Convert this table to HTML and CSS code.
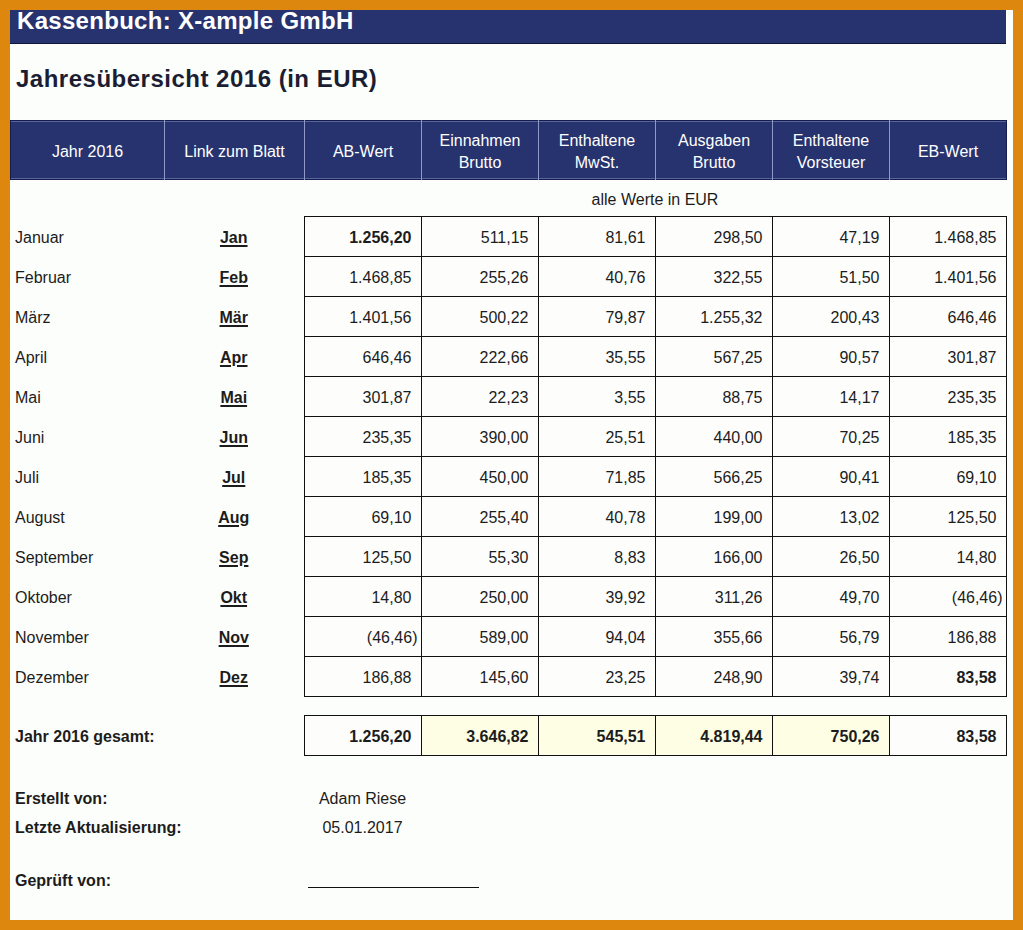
FILE: index.html
```html
<!DOCTYPE html>
<html lang="de">
<head>
<meta charset="utf-8">
<title>Kassenbuch</title>
<link rel="stylesheet" href="styles.css">
</head>
<body>
<div class="frame">
  <div class="page">
    <div class="titlebar">Kassenbuch: X-ample GmbH</div>
    <h1 class="heading">Jahresübersicht 2016 (in EUR)</h1>

    <table class="grid head">
      <colgroup>
        <col class="c-month"><col class="c-link"><col class="c-num"><col class="c-num"><col class="c-num"><col class="c-num"><col class="c-num"><col class="c-num">
      </colgroup>
      <tr>
        <th>Jahr 2016</th>
        <th>Link zum Blatt</th>
        <th>AB-Wert</th>
        <th>Einnahmen<br>Brutto</th>
        <th>Enthaltene<br>MwSt.</th>
        <th>Ausgaben<br>Brutto</th>
        <th>Enthaltene<br>Vorsteuer</th>
        <th>EB-Wert</th>
      </tr>
    </table>

    <div class="unit-row"><div class="unit">alle Werte in EUR</div></div>

    <table class="grid data">
      <colgroup>
        <col class="c-month"><col class="c-link"><col class="c-num"><col class="c-num"><col class="c-num"><col class="c-num"><col class="c-num"><col class="c-num">
      </colgroup>
      <tr><td class="month">Januar</td><td class="link"><a>Jan</a></td><td class="num b">1.256,20</td><td class="num">511,15</td><td class="num">81,61</td><td class="num">298,50</td><td class="num">47,19</td><td class="num">1.468,85</td></tr>
      <tr><td class="month">Februar</td><td class="link"><a>Feb</a></td><td class="num">1.468,85</td><td class="num">255,26</td><td class="num">40,76</td><td class="num">322,55</td><td class="num">51,50</td><td class="num">1.401,56</td></tr>
      <tr><td class="month">März</td><td class="link"><a>Mär</a></td><td class="num">1.401,56</td><td class="num">500,22</td><td class="num">79,87</td><td class="num">1.255,32</td><td class="num">200,43</td><td class="num">646,46</td></tr>
      <tr><td class="month">April</td><td class="link"><a>Apr</a></td><td class="num">646,46</td><td class="num">222,66</td><td class="num">35,55</td><td class="num">567,25</td><td class="num">90,57</td><td class="num">301,87</td></tr>
      <tr><td class="month">Mai</td><td class="link"><a>Mai</a></td><td class="num">301,87</td><td class="num">22,23</td><td class="num">3,55</td><td class="num">88,75</td><td class="num">14,17</td><td class="num">235,35</td></tr>
      <tr><td class="month">Juni</td><td class="link"><a>Jun</a></td><td class="num">235,35</td><td class="num">390,00</td><td class="num">25,51</td><td class="num">440,00</td><td class="num">70,25</td><td class="num">185,35</td></tr>
      <tr><td class="month">Juli</td><td class="link"><a>Jul</a></td><td class="num">185,35</td><td class="num">450,00</td><td class="num">71,85</td><td class="num">566,25</td><td class="num">90,41</td><td class="num">69,10</td></tr>
      <tr><td class="month">August</td><td class="link"><a>Aug</a></td><td class="num">69,10</td><td class="num">255,40</td><td class="num">40,78</td><td class="num">199,00</td><td class="num">13,02</td><td class="num">125,50</td></tr>
      <tr><td class="month">September</td><td class="link"><a>Sep</a></td><td class="num">125,50</td><td class="num">55,30</td><td class="num">8,83</td><td class="num">166,00</td><td class="num">26,50</td><td class="num">14,80</td></tr>
      <tr><td class="month">Oktober</td><td class="link"><a>Okt</a></td><td class="num">14,80</td><td class="num">250,00</td><td class="num">39,92</td><td class="num">311,26</td><td class="num">49,70</td><td class="num neg">(46,46)</td></tr>
      <tr><td class="month">November</td><td class="link"><a>Nov</a></td><td class="num neg">(46,46)</td><td class="num">589,00</td><td class="num">94,04</td><td class="num">355,66</td><td class="num">56,79</td><td class="num">186,88</td></tr>
      <tr><td class="month">Dezember</td><td class="link"><a>Dez</a></td><td class="num">186,88</td><td class="num">145,60</td><td class="num">23,25</td><td class="num">248,90</td><td class="num">39,74</td><td class="num b">83,58</td></tr>
    </table>

    <table class="grid data total">
      <colgroup>
        <col class="c-month"><col class="c-link"><col class="c-num"><col class="c-num"><col class="c-num"><col class="c-num"><col class="c-num"><col class="c-num">
      </colgroup>
      <tr><td class="month b" colspan="2">Jahr 2016 gesamt:</td><td class="num b">1.256,20</td><td class="num b hl">3.646,82</td><td class="num b hl">545,51</td><td class="num b hl">4.819,44</td><td class="num b hl">750,26</td><td class="num b">83,58</td></tr>
    </table>

    <div class="meta">
      <div class="label">Erstellt von:</div><div class="value">Adam Riese</div>
      <div class="label">Letzte Aktualisierung:</div><div class="value">05.01.2017</div>
      <div class="label sign">Geprüft von:</div><div class="value sign"><span class="sign-line"></span></div>
    </div>
  </div>
</div>
</body>
</html>
```

FILE: styles.css
```css
html, body {
  margin: 0;
  padding: 0;
}
body {
  background: #de870f;
  font-family: "Liberation Sans", Arial, sans-serif;
  color: #1c1c1c;
}
.frame {
  width: 1023px;
  height: 930px;
  padding: 10px;
  box-sizing: border-box;
}
.page {
  background: #fcfefb;
  height: 910px;
  padding-right: 7px;
  box-sizing: border-box;
}
.titlebar {
  height: 34px;
  box-sizing: border-box;
  background: #27336f;
  border-bottom: 1px solid #10173d;
  color: #ffffff;
  font-weight: bold;
  font-size: 24px;
  letter-spacing: 0.3px;
  line-height: 22px;
  padding-left: 7px;
}
.heading {
  margin: 23px 0 29px 0;
  padding-left: 6px;
  font-size: 24px;
  letter-spacing: 0.5px;
  line-height: 24px;
  font-weight: bold;
  color: #1b1e33;
}
.grid {
  width: 996px;
  table-layout: fixed;
  border-collapse: collapse;
  border-spacing: 0;
}
.c-month { width: 154px; }
.c-link { width: 140px; }
.c-num { width: 117px; }

.head {
  background: #27336f;
  border: 1px solid #151d4f;
}
.head th {
  height: 54px;
  padding: 4px 0 0 0;
  color: #ffffff;
  font-weight: normal;
  font-size: 16px;
  line-height: 22px;
  text-align: center;
  vertical-align: middle;
  border-left: 1px solid #8e97c6;
  border-right: 1px solid #8e97c6;
  box-shadow: inset 0 1px 0 #5a649c, inset 0 -1px 0 #5a649c;
}
.head th:first-child { border-left: none; }
.head th:last-child { border-right: none; }

.unit-row {
  display: flex;
  height: 36px;
  box-sizing: border-box;
  padding-top: 4px;
  align-items: center;
}
.unit {
  margin-left: 294px;
  width: 702px;
  text-align: center;
  font-size: 16px;
  color: #1c1c1c;
}

.data td {
  height: 37px;
  padding: 2px 0 0 0;
  font-size: 16px;
  vertical-align: middle;
  white-space: nowrap;
}
.data td.month {
  padding-left: 5px;
  text-align: left;
}
.data td.link {
  text-align: center;
  font-weight: bold;
}
.data td.link a {
  text-decoration: underline;
  text-decoration-thickness: 2px;
  text-underline-offset: 2px;
  color: #1c1c1c;
}
.data td.num {
  border: 1px solid #111111;
  text-align: right;
  padding-right: 9px;
  background: #fdfefc;
}
.data td.num.neg {
  padding-right: 3px;
}
.b { font-weight: bold; }

.total {
  margin-top: 18px;
}
.total td.num.hl {
  background: #fefee4;
}

.meta {
  display: grid;
  grid-template-columns: 294px 117px;
  margin-top: 28px;
  font-size: 16px;
}
.meta .label {
  padding-left: 5px;
  font-weight: bold;
  line-height: 29px;
}
.meta .value {
  text-align: center;
  line-height: 29px;
}
.meta .sign {
  margin-top: 24px;
}
.meta .value.sign {
  position: relative;
}
.sign-line {
  position: absolute;
  left: 4px;
  top: 21px;
  width: 171px;
  height: 1px;
  background: #111111;
}
```
